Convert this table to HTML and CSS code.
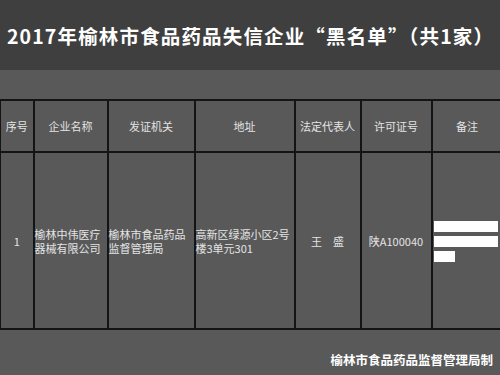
FILE: index.html
```html
<!DOCTYPE html>
<html lang="zh-CN">
<head>
<meta charset="utf-8">
<link rel="stylesheet" href="styles.css">
</head>
<body>
<header class="band">
  <h1 class="title">2017年榆林市食品药品失信企业“黑名单”（共1家）</h1>
</header>
<main class="content">
  <table class="list">
    <colgroup>
      <col class="c1"><col class="c2"><col class="c3"><col class="c4"><col class="c5"><col class="c6"><col class="c7">
    </colgroup>
    <thead>
      <tr>
        <th>序号</th><th>企业名称</th><th>发证机关</th><th>地址</th><th>法定代表人</th><th>许可证号</th><th>备注</th>
      </tr>
    </thead>
    <tbody>
      <tr>
        <td class="center">1</td>
        <td>榆林中伟医疗器械有限公司</td>
        <td>榆林市食品药品监督管理局</td>
        <td>高新区绿源小区2号楼3单元301</td>
        <td class="center">王　盛</td>
        <td class="center">陕A100040</td>
        <td class="note">
          <div class="bars">
            <span class="bar"></span>
            <span class="bar"></span>
            <span class="bar short"></span>
          </div>
        </td>
      </tr>
    </tbody>
  </table>
  <p class="footer">榆林市食品药品监督管理局制</p>
</main>
</body>
</html>
```
FILE: styles.css
```css
html, body {
  margin: 0;
  padding: 0;
}
body {
  width: 500px;
  height: 375px;
  background: #595959;
  font-family: "Noto Sans CJK SC", "Noto Sans", sans-serif;
  color: #e4e4e4;
  overflow: hidden;
}
.band {
  height: 70px;
  background: #3f3f3f;
  display: flex;
  align-items: center;
  justify-content: center;
}
.title {
  margin: 0 0 0 1px;
  font-size: 19.5px;
  font-weight: 700;
  color: #ffffff;
  white-space: nowrap;
  letter-spacing: 1.15px;
}
.content {
  padding-top: 29px;
}
.list {
  width: 501px;
  border-collapse: collapse;
  table-layout: fixed;
  font-size: 11px;
  line-height: 14px;
}
.c1 { width: 33px; }
.c2 { width: 74px; }
.c3 { width: 87px; }
.c4 { width: 100px; }
.c5 { width: 66px; }
.c6 { width: 71px; }
.c7 { width: 70px; }
.list th, .list td {
  border: 2px solid #141414;
  padding: 0;
  vertical-align: middle;
}
.list tr > :first-child { border-left: 1px solid #141414; }
.list tr > :last-child { border-right: none; }
.list th {
  height: 50px;
  font-weight: 400;
  text-align: center;
  color: #e4e4e4;
}
.list td {
  height: 175px;
  text-align: left;
}
.list td.center { text-align: center; }
.list td.note { padding: 0 1px 0 1px; }
.bars {
  display: flex;
  flex-direction: column;
  gap: 4px;
  align-items: flex-start;
  padding-top: 2px;
}
.bar {
  display: block;
  width: 64px;
  height: 11px;
  background: #ffffff;
}
.bar.short { width: 21px; }
.footer {
  margin: 20px 7px 0 0;
  text-align: right;
  font-size: 12.5px;
  font-weight: 700;
  color: #ffffff;
}
```
